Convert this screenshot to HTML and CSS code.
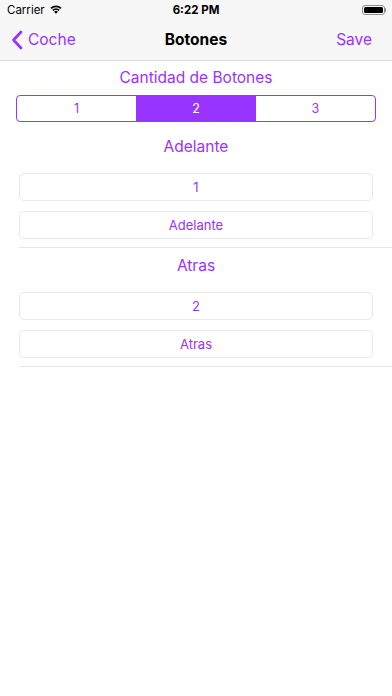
FILE: index.html
```html
<!DOCTYPE html>
<html lang="es">
<head>
<meta charset="utf-8">
<title>Botones</title>
<link rel="stylesheet" href="styles.css">
</head>
<body>
<div class="statusbar">
  <div class="sb-left">
    <span class="carrier">Carrier</span>
    <svg class="wifi" width="12" height="9" viewBox="0 0 12 9">
      <path d="M6 8.8 L4.1 6.7 A2.8 2.8 0 0 1 7.9 6.7 Z" fill="#000"/>
      <path d="M2.3 4.8 A5.3 5.3 0 0 1 9.7 4.8 L8.6 6 A3.8 3.8 0 0 0 3.4 6 Z" fill="#000"/>
      <path d="M0.4 2.8 A8 8 0 0 1 11.6 2.8 L10.5 4 A6.4 6.4 0 0 0 1.5 4 Z" fill="#000"/>
    </svg>
  </div>
  <div class="time">6:22 PM</div>
  <div class="sb-right">
    <div class="battery"><div class="battery-fill"></div></div>
    <div class="battery-nub"></div>
  </div>
</div>
<div class="navbar">
  <div class="nav-back">
    <svg class="chev" width="12" height="20" viewBox="0 0 12 20">
      <path d="M10 2 L2.5 10 L10 18" fill="none" stroke="#9933ff" stroke-width="2.8" stroke-linecap="round" stroke-linejoin="round"/>
    </svg>
    <span>Coche</span>
  </div>
  <div class="nav-title">Botones</div>
  <div class="nav-save">Save</div>
</div>
<main class="content">
  <div class="title">Cantidad de Botones</div>
  <div class="segmented">
    <div class="seg">1</div>
    <div class="seg seg-active">2</div>
    <div class="seg">3</div>
  </div>
  <section class="section">
    <div class="heading">Adelante</div>
    <div class="btn-list">
      <div class="btn">1</div>
      <div class="btn">Adelante</div>
    </div>
  </section>
  <section class="section">
    <div class="heading">Atras</div>
    <div class="btn-list">
      <div class="btn">2</div>
      <div class="btn">Atras</div>
    </div>
  </section>
</main>
</body>
</html>
```
FILE: styles.css
```css
* { box-sizing: border-box; }
html, body {
  margin: 0;
  padding: 0;
  background: #ffffff;
  font-family: Inter, "Liberation Sans", Arial, sans-serif;
  width: 392px;
  height: 696px;
  overflow: hidden;
}
.statusbar {
  height: 19px;
  background: #f7f7f7;
  display: flex;
  align-items: center;
  justify-content: space-between;
  position: relative;
  padding: 0 6px 0 7px;
}
.sb-left {
  display: flex;
  align-items: center;
  gap: 5px;
}
.carrier {
  font-size: 11.5px;
  color: #000;
}
.wifi { display: block; margin-top: -1px; }
.time {
  position: absolute;
  left: 0;
  right: 0;
  text-align: center;
  font-size: 11.5px;
  font-weight: 700;
  color: #000;
  pointer-events: none;
}
.sb-right {
  display: flex;
  align-items: center;
}
.battery {
  width: 23px;
  height: 10px;
  border: 1px solid #8e8e8e;
  border-radius: 3px;
  padding: 1px;
}
.battery-fill {
  width: 100%;
  height: 100%;
  background: #000;
  border-radius: 1.5px;
}
.battery-nub {
  width: 1.5px;
  height: 4px;
  background: #8e8e8e;
  border-radius: 0 1px 1px 0;
}
.navbar {
  height: 42px;
  background: #f7f7f7;
  border-bottom: 1px solid #dcdcdc;
  display: flex;
  align-items: center;
  justify-content: space-between;
  position: relative;
  padding: 0 20px 0 11px;
  font-size: 15.5px;
}
.nav-back {
  display: flex;
  align-items: center;
  gap: 5px;
  color: #9933ff;
}
.chev { display: block; }
.nav-title {
  position: absolute;
  left: 0;
  right: 0;
  text-align: center;
  font-weight: 700;
  color: #000;
  pointer-events: none;
}
.nav-save { color: #9933ff; }
.content {
  display: flex;
  flex-direction: column;
}
.title {
  margin-top: 7px;
  height: 20px;
  line-height: 20px;
  text-align: center;
  font-size: 15.5px;
  color: #9933ff;
}
.segmented {
  margin: 7px 16px 7px 16px;
  height: 27px;
  border: 1px solid #9933ff;
  border-radius: 4px;
  display: grid;
  grid-template-columns: 1fr 1fr 1fr;
  overflow: hidden;
}
.seg {
  display: flex;
  align-items: center;
  justify-content: center;
  font-size: 12.5px;
  color: #9933ff;
}
.seg-active {
  background: #9933ff;
  color: #ffffff;
}
.section {
  margin-left: 19px;
  padding: 8px 0 8px;
  border-bottom: 1px solid #e6e6e6;
}
.heading {
  height: 20px;
  line-height: 20px;
  text-align: center;
  font-size: 15.5px;
  color: #9933ff;
  margin-right: 19px;
  margin-bottom: 16px;
}
.btn-list {
  display: flex;
  flex-direction: column;
  gap: 10px;
  margin-right: 19px;
}
.btn {
  height: 28px;
  border: 1px solid #e8e8e8;
  border-radius: 5px;
  display: flex;
  align-items: center;
  justify-content: center;
  font-size: 13px;
  color: #9933ff;
}
```
